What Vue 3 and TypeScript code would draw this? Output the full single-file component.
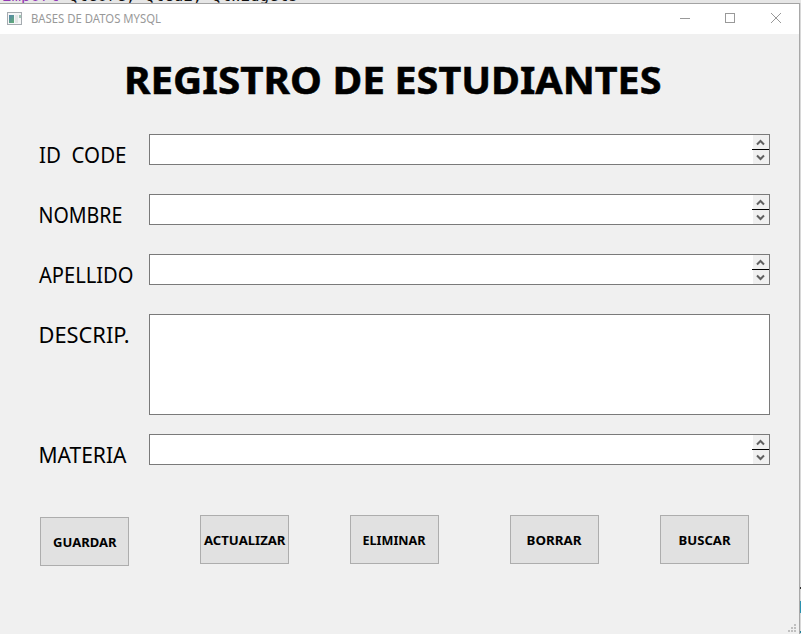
<script setup lang="ts">
interface TextSpan {
  label: string
  left: number
  width: number
}

interface Field extends TextSpan {
  multiline?: boolean
}

const heading: TextSpan[] = [
  { label: 'REGISTRO', left: -2, width: 198 },
  { label: 'DE', left: 206.5, width: 52.5 },
  { label: 'ESTUDIANTES', left: 268.5, width: 267 },
]

const fields: Field[] = [
  { label: 'ID\u00a0\u00a0CODE', left: 0, width: 87.5 },
  { label: 'NOMBRE', left: -0.5, width: 84 },
  { label: 'APELLIDO', left: 0, width: 94.5 },
  { label: 'DESCRIP.', left: -0.5, width: 91, multiline: true },
  { label: 'MATERIA', left: -0.5, width: 88 },
]

const actions: TextSpan[] = [
  { label: 'GUARDAR', left: 12, width: 63.5 },
  { label: 'ACTUALIZAR', left: 3, width: 81.5 },
  { label: 'ELIMINAR', left: 11.5, width: 63 },
  { label: 'BORRAR', left: 15.5, width: 55 },
  { label: 'BUSCAR', left: 17.5, width: 52 },
]
</script>

<template>
  <div class="screen">
    <div class="editor-line"><span class="keyword">import</span> QtCore, QtGui, QtWidgets</div>
    <div class="middle">
      <main class="window">
        <header class="titlebar">
          <svg class="app-icon" width="15" height="13" viewBox="0 0 15 13">
            <defs>
              <linearGradient id="pane" x1="0" y1="0" x2="0.6" y2="1">
                <stop offset="0" stop-color="#5586ac" />
                <stop offset="1" stop-color="#60a77c" />
              </linearGradient>
            </defs>
            <rect x="0.5" y="0.5" width="14" height="12" fill="#f5f6f7" stroke="#a5abb0" />
            <rect x="2" y="3" width="5" height="8" fill="url(#pane)" />
            <rect x="8" y="3" width="3" height="8" fill="#e3e5e6" />
            <rect x="12" y="3" width="2" height="3" fill="#9fc4b4" />
          </svg>
          <svg class="caption" width="140" height="30">
            <text x="0" y="19" textLength="130" lengthAdjust="spacingAndGlyphs">BASES DE DATOS MYSQL</text>
          </svg>
          <svg class="controls" width="102" height="12" viewBox="0 0 102 12" fill="none" stroke="#999">
            <path d="M0 6.5H10M45.5 1.5h9v9h-9z" shape-rendering="crispEdges" />
            <path d="M91 1l10 10M101 1L91 11" />
          </svg>
        </header>
        <svg class="heading" width="560" height="60">
          <text
            v-for="word in heading"
            :key="word.label"
            :x="word.left"
            y="60"
            :textLength="word.width"
            lengthAdjust="spacingAndGlyphs"
          >{{ word.label }}</text>
        </svg>
        <form class="form" @submit.prevent>
          <div v-for="field in fields" :key="field.label" class="row" :class="{ tall: field.multiline }">
            <svg class="label" width="110" height="31">
              <text :x="field.left" y="29" :textLength="field.width" lengthAdjust="spacingAndGlyphs">{{ field.label }}</text>
            </svg>
            <div class="input">
              <div v-if="!field.multiline" class="scroller">
                <svg width="17" height="14" viewBox="0 0 17 14"><path d="M5 9.5l3.5-3.5L12 9.5" /></svg>
                <i class="divider" />
                <svg width="17" height="14" viewBox="0 0 17 14"><path d="M5 5.5L8.5 9 12 5.5" /></svg>
              </div>
            </div>
          </div>
        </form>
        <div class="actions">
          <button v-for="action in actions" :key="action.label" type="button">
            <svg width="87" height="47">
              <text :x="action.left" y="29" :textLength="action.width" lengthAdjust="spacingAndGlyphs">{{ action.label }}</text>
            </svg>
          </button>
        </div>
        <svg class="grip" width="8" height="8" viewBox="0 0 8 8" fill="#bfbfbf" shape-rendering="crispEdges">
          <path d="M6 0h2v2H6zM3 3h2v2H3zM6 3h2v2H6zM0 6h2v2H0zM3 6h2v2H3zM6 6h2v2H6z" />
        </svg>
      </main>
      <aside class="editor-edge"><i /><b /><em /></aside>
    </div>
  </div>
</template>

<style>
body {
  margin: 0;
  overflow: hidden;
}
</style>

<style scoped>
.screen {
  width: 801px;
  height: 634px;
  overflow: hidden;
  background: #e6e6e6;
  font-family: "Noto Sans", sans-serif;
}
.editor-line {
  display: flex;
  align-items: flex-end;
  height: 3px;
  overflow: hidden;
  padding-left: 2px;
  box-sizing: border-box;
  color: #111;
  font: 15.85px/14px "DejaVu Sans Mono", monospace;
  white-space: pre;
}
.keyword {
  color: #9238b4;
}
.middle {
  display: flex;
  height: 631px;
}
.window {
  position: relative;
  width: 800px;
  box-sizing: border-box;
  border-top: 1px solid #a3a3a3;
  border-right: 1px solid #a8a8a8;
  background: #f0f0f0;
}
.titlebar {
  display: flex;
  height: 30px;
  background: #fff;
}
svg {
  display: block;
  flex: none;
}
text {
  fill: #000;
}
.app-icon {
  margin: 8px 9px 0 7px;
}
.caption text {
  fill: #999;
  font-size: 12px;
}
.controls {
  margin: 8px 17px 0 auto;
}
.heading {
  margin-left: 126px;
  overflow: visible;
}
.heading text {
  font-size: 37.5px;
  font-weight: 700;
  stroke: #000;
  stroke-width: 0.5px;
}
.form {
  display: flex;
  flex-direction: column;
  gap: 29px;
  margin: 40px 0 0 39px;
}
.row {
  display: flex;
  height: 31px;
}
.row.tall {
  height: 101px;
  margin-bottom: -10px;
}
.label {
  overflow: visible;
}
.label text {
  font-size: 22.4px;
}
.input {
  display: flex;
  justify-content: flex-end;
  width: 621px;
  box-sizing: border-box;
  border: 1px solid #7a7a7a;
  background: #fff;
}
.scroller {
  width: 17px;
  background: linear-gradient(90deg, #fff 1px, #f0f0f0 1px);
}
.scroller path {
  fill: none;
  stroke: #606060;
  stroke-width: 2;
}
.divider {
  display: block;
  height: 1px;
  background: #000;
}
.actions {
  display: flex;
  align-items: flex-start;
  padding: 50px 0 0 40px;
}
button {
  width: 89px;
  height: 49px;
  margin: 0 61px 0 0;
  padding: 0;
  border: 1px solid #adadad;
  background: #e1e1e1;
  font-family: inherit;
}
button:first-child {
  margin: 2px 71px 0 0;
}
button:nth-child(3) {
  margin-right: 71px;
}
button text {
  font-size: 12.8px;
  font-weight: 700;
}
.grip {
  position: absolute;
  right: 3px;
  bottom: 2px;
}
.editor-edge {
  display: flex;
  flex-direction: column;
  width: 1px;
  background: #d8d8d8;
}
.editor-edge i {
  height: 2px;
  margin-top: 584px;
  background: #333;
}
.editor-edge b {
  height: 12px;
  margin-top: 12px;
  background: #2b91af;
}
.editor-edge em {
  height: 2px;
  margin-top: 18px;
  background: #267f99;
}
</style>
